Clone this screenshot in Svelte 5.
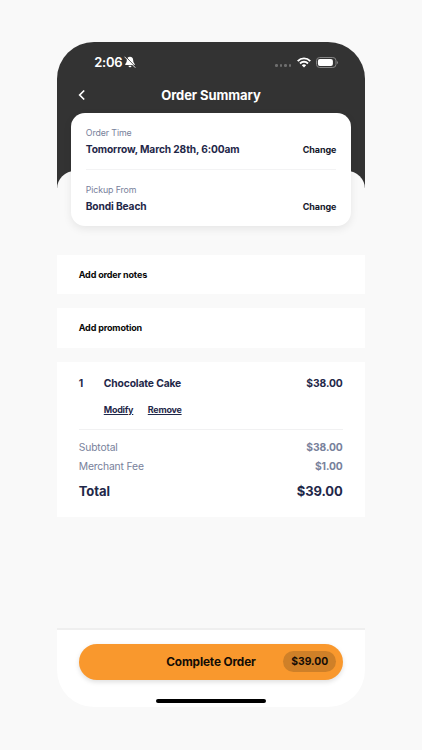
<script lang="ts">
    const details = [
        { label: "Order Time", value: "Tomorrow, March 28th, 6:00am" },
        { label: "Pickup From", value: "Bondi Beach" },
    ];

    const item = { quantity: 1, name: "Chocolate Cake", price: 38 };
    const merchantFee = 1;
    const total = item.price + merchantFee;

    function money(value: number): string {
        return "$" + value.toFixed(2);
    }
</script>

<div class="phone">
    <header>
        <div class="status">
            <span class="clock">2:06</span>
            <svg class="bell" width="12" height="12" viewBox="0 0 12 12">
                <path
                    d="M6 .8C4 .8 2.800 2.300 2.800 4.200 2.800 6.500 1.700 7.300 1.200 8.200c-.2.5 0 .8.5.8h8.600c.5 0 .7-.3.5-.8C10.300 7.300 9.200 6.500 9.200 4.200 9.200 2.300 8 .8 6 .8zM4.500 9.700a1.500 1.500 0 0 0 3 0z"
                    fill="#fff"
                />
                <path d="M1.500.5 11.700 11.100" stroke="#333" stroke-width=".9" />
                <path
                    d="M.8 1 11 11.400"
                    stroke="#fff"
                    stroke-width=".9"
                    stroke-linecap="round"
                />
            </svg>
            <div class="dots">
                <i></i><i></i><i></i><i></i>
            </div>
            <svg class="wifi" width="14" height="11" viewBox="0 0 14 11">
                <g fill="none" stroke="#fff" stroke-width="1.900">
                    <path d="M.7 4.100C4.300.4 9.700.4 13.300 4.100" />
                    <path d="M3 6.500c2.300-2.300 5.700-2.300 8 0" />
                </g>
                <path d="M4.800 8.200c1.300-1.200 3.100-1.200 4.400 0L7 10.500z" fill="#fff" />
            </svg>
            <svg class="battery" width="23" height="11" viewBox="0 0 23 11">
                <rect
                    x=".5"
                    y=".5"
                    width="19.500"
                    height="10"
                    rx="3.200"
                    fill="none"
                    stroke="#858585"
                />
                <rect x="1.900" y="1.900" width="15" height="7.200" rx="2" fill="#fff" />
                <path d="M21 3.900c1.300.5 1.300 2.700 0 3.200z" fill="#858585" />
            </svg>
        </div>
        <div class="nav">
            <svg width="8" height="12" viewBox="0 0 8 12">
                <path
                    d="M6.200 1.500 1.700 6l4.500 4.500"
                    fill="none"
                    stroke="#fff"
                    stroke-width="1.700"
                />
            </svg>
            <h1>Order Summary</h1>
        </div>
    </header>

    <main>
        <section class="details">
            {#each details as detail}
                <div class="detail">
                    <div class="label">{detail.label}</div>
                    <div class="value">
                        <span>{detail.value}</span>
                        <button class="change">Change</button>
                    </div>
                </div>
            {/each}
        </section>

        <button class="add">Add order notes</button>
        <button class="add">Add promotion</button>

        <section class="order">
            <div class="item">
                <span class="quantity">{item.quantity}</span>
                <span class="name">{item.name}</span>
                <span class="amount">{money(item.price)}</span>
            </div>
            <div class="actions">
                <button class="modify">Modify</button>
                <button class="remove">Remove</button>
            </div>
            <div class="row subtotal">
                <span>Subtotal</span>
                <b class="amount">{money(item.price)}</b>
            </div>
            <div class="row">
                <span>Merchant Fee</span>
                <b class="amount">{money(merchantFee)}</b>
            </div>
            <div class="row total">
                <span>Total</span>
                <b class="amount">{money(total)}</b>
            </div>
        </section>
    </main>

    <footer>
        <button class="complete">
            <span class="complete-label">Complete Order</span>
            <span class="price">{money(total)}</span>
        </button>
        <div class="home"></div>
    </footer>
</div>

<style>
    :global(body) {
        background-color: #f9f9f9;
    }

    button {
        display: block;
        margin: 0;
        padding: 0;
        border: 0;
        background: none;
        font: inherit;
        letter-spacing: inherit;
        color: inherit;
        text-align: left;
        cursor: pointer;
    }

    .phone {
        box-sizing: border-box;
        width: 307.500px;
        height: 665px;
        margin: 42px 57.250px 0;
        border-radius: 37px;
        background-color: #f9f9f9;
        overflow: hidden;
        display: flex;
        flex-direction: column;
        font-family: Inter, "Liberation Sans", sans-serif;
        color: #1f2849;
    }

    header {
        height: 146px;
        flex: none;
        background-color: #333;
        color: #fff;
    }

    .status {
        height: 40px;
        display: flex;
        align-items: center;
        padding-left: 37px;
    }

    .clock {
        font-size: 13px;
        font-weight: 600;
        letter-spacing: -0.3px;
        width: 29px;
    }

    .bell {
        margin-left: 1px;
    }

    .dots {
        display: flex;
        gap: 1.800px;
        margin: 7px 5.500px 0 139px;
    }

    .dots i {
        width: 2.700px;
        height: 2.700px;
        border-radius: 50%;
        background-color: #6e6e6e;
    }

    .battery {
        margin-left: 5px;
    }

    .nav {
        height: 26px;
        display: flex;
        align-items: center;
        padding: 0 20px 0 21px;
    }

    h1 {
        flex: 1;
        margin: 0 9px 0 0;
        font-size: 13px;
        font-weight: 700;
        letter-spacing: -0.08px;
        line-height: 26px;
        text-align: center;
    }

    main {
        flex: 1;
        margin-top: -17px;
        border-radius: 18px 18px 0 0;
        background-color: #f9f9f9;
    }

    .details {
        margin: -58px 14px 28.500px;
        padding: 0 14.500px;
        height: 113px;
        border-radius: 14px;
        background-color: #fff;
        box-shadow: 0 3px 8px rgba(0, 0, 0, 0.08);
    }

    .detail {
        box-sizing: border-box;
        height: 56px;
        padding-top: 13px;
    }

    .detail + .detail {
        height: 57px;
        border-top: 1px solid #f3f3f4;
    }

    .label {
        font-size: 8.800px;
        letter-spacing: -0.1px;
        line-height: 14px;
        color: #78819b;
    }

    .value {
        display: flex;
        justify-content: space-between;
        font-size: 10.200px;
        font-weight: 700;
        letter-spacing: -0.12px;
        line-height: 19px;
    }

    .change {
        font-size: 9px;
        font-weight: 700;
        line-height: 20px;
        color: #14172a;
    }

    .add {
        width: 100%;
        height: 39.500px;
        margin-bottom: 14px;
        padding-left: 21.500px;
        background-color: #fff;
        font-size: 9px;
        font-weight: 700;
        letter-spacing: -0.15px;
        color: #080808;
    }

    .order {
        box-sizing: border-box;
        height: 155px;
        padding: 14px 21.500px 0;
        background-color: #fff;
    }

    .item {
        display: flex;
        font-size: 10.300px;
        font-weight: 700;
        letter-spacing: -0.13px;
        line-height: 14px;
    }

    .quantity {
        width: 25px;
    }

    .name {
        flex: 1;
    }

    .amount {
        padding-right: 0.5px;
        letter-spacing: -0.07px;
    }

    .actions {
        display: flex;
        gap: 14.500px;
        height: 26px;
        margin-top: 13px;
        padding-left: 25px;
        border-bottom: 1px solid #f1f1f2;
    }

    .actions button {
        height: 14px;
        font-size: 9px;
        font-weight: 700;
        letter-spacing: -0.25px;
        line-height: 14px;
        text-decoration: underline;
    }

    .row {
        display: flex;
        justify-content: space-between;
        font-size: 10.300px;
        letter-spacing: -0.15px;
        line-height: 19.500px;
        color: #78819b;
    }

    .row b {
        font-weight: 700;
    }

    .subtotal {
        margin-top: 8px;
    }

    .total {
        margin-top: 2px;
        font-size: 13px;
        font-weight: 700;
        letter-spacing: -0.05px;
        line-height: 24px;
        color: #1f2849;
    }

    footer {
        box-sizing: border-box;
        height: 79px;
        padding: 14px 21.500px 0;
        border-top: 2px solid #efefef;
        background-color: #fff;
    }

    .complete {
        position: relative;
        width: 100%;
        height: 35.500px;
        border-radius: 18px;
        background-color: #f9982d;
        box-shadow: 0 2px 5px rgba(0, 0, 0, 0.13);
        font-weight: 700;
        color: #120c06;
        text-align: center;
    }

    .complete-label {
        display: block;
        font-size: 11.800px;
        letter-spacing: -0.13px;
        line-height: 36px;
    }

    .price {
        position: absolute;
        top: 7px;
        right: 7px;
        width: 53px;
        height: 21px;
        border-radius: 11px;
        background-color: #cf8028;
        font-size: 10.300px;
        line-height: 21px;
    }

    .home {
        width: 110px;
        height: 4px;
        margin: 19px auto 0;
        border-radius: 2px;
        background-color: #000;
    }
</style>
